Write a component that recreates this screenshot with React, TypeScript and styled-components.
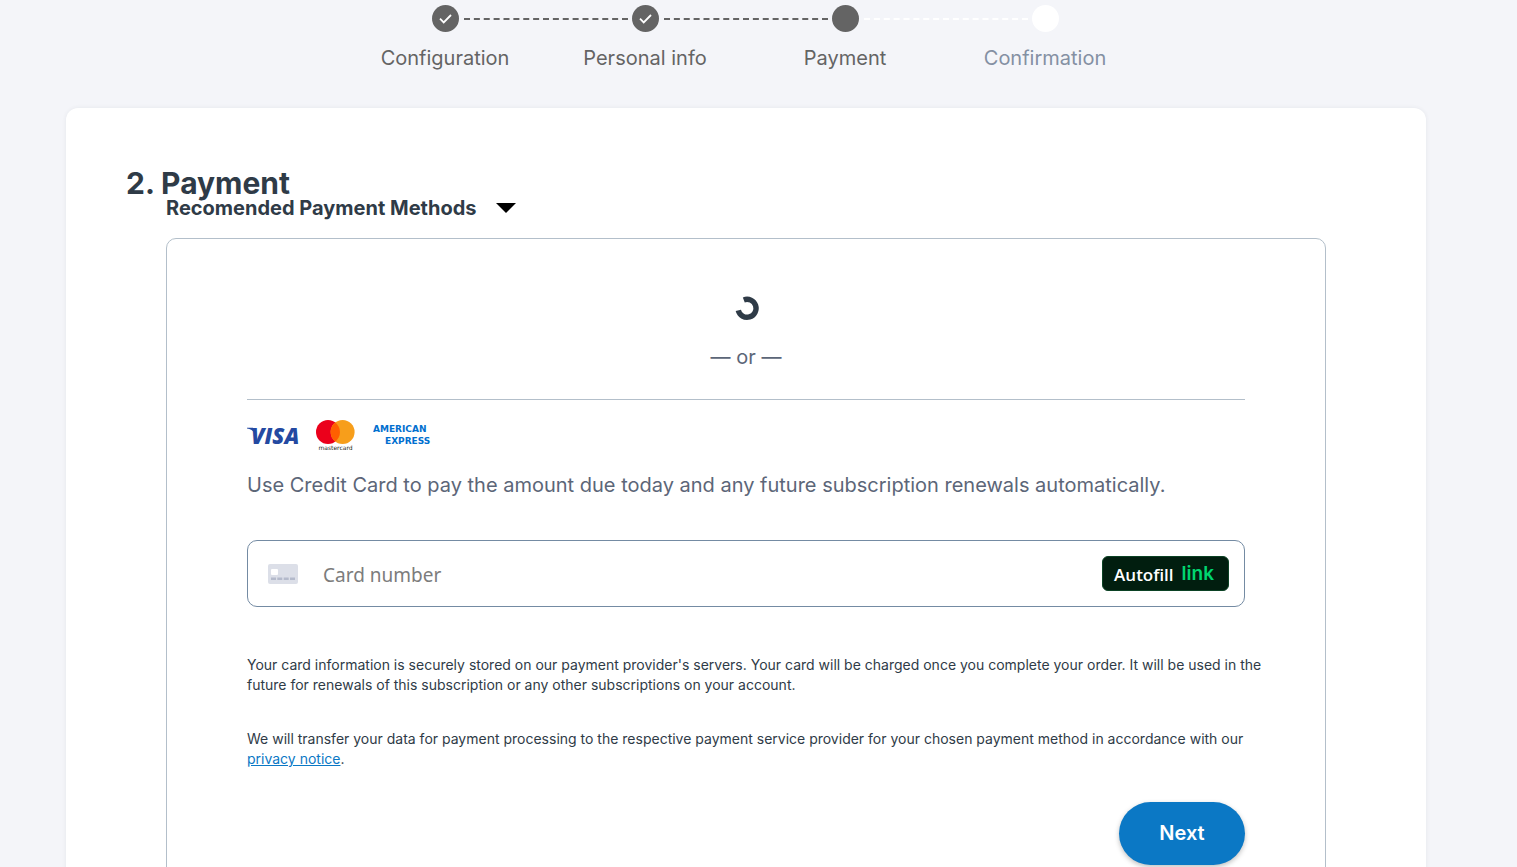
import React from "react";
import styled, { createGlobalStyle, keyframes } from "styled-components";

const GlobalStyle = createGlobalStyle`
  *, *::before, *::after { box-sizing: border-box; }
  body {
    margin: 0;
    background: #f4f5f9;
    color: #2f3b47;
    font-family: Inter, "Liberation Sans", sans-serif;
    font-size: 20px;
    line-height: 28px;
  }
`;

const Page = styled.main`
  display: flex;
  flex-direction: column;
  align-items: center;
  gap: 36px;
  padding: 5px 25px 60px 0;
`;

const Steps = styled.ol`
  display: flex;
  list-style: none;
  margin: 0;
  padding: 0 2px 0 0;
`;

const Step = styled.li<{ $pending?: boolean }>`
  display: grid;
  grid-template-columns: minmax(0, 1fr) 27px minmax(0, 1fr);
  align-items: center;
  row-gap: 12px;
  width: 200px;
  color: ${(p) => (p.$pending ? "#8490a3" : "#646464")};
`;

const Marker = styled.span<{ $pending?: boolean }>`
  grid-column: 2;
  display: grid;
  place-items: center;
  height: 27px;
  border-radius: 50%;
  background: ${(p) => (p.$pending ? "#ffffff" : "#646464")};
`;

const Connector = styled.span<{ $pending?: boolean }>`
  grid-column: 3;
  width: 164px;
  margin-left: 5px;
  border-top: 2px dashed ${(p) => (p.$pending ? "#ffffff" : "#646464")};
`;

const StepLabel = styled.span`
  grid-column: 1 / -1;
  text-align: center;
`;

const Card = styled.section`
  width: 100%;
  max-width: 1360px;
  padding: 60px;
  border-radius: 12px;
  background: #ffffff;
  box-shadow: 0 0 4px rgba(47, 59, 71, 0.08);
`;

const Title = styled.h1`
  margin: 0;
  font-size: 30px;
  line-height: 30px;
  font-weight: 700;
`;

const Methods = styled.div`
  display: flex;
  flex-direction: column;
  align-items: stretch;
  gap: 20px;
  padding: 0 40px;
`;

const MethodsToggle = styled.button`
  display: flex;
  align-items: center;
  align-self: flex-start;
  gap: 20px;
  padding: 0;
  border: 0;
  background: none;
  color: inherit;
  font: inherit;
  line-height: 20px;
  font-weight: 700;
  cursor: pointer;
`;

const MethodPanel = styled.form`
  display: flex;
  flex-direction: column;
  padding: 56px 80px 60px;
  border: 1px solid #b3bfca;
  border-radius: 10px;
`;

const spin = keyframes`
  to { transform: rotate(360deg); }
`;

const Spinner = styled.svg`
  align-self: center;
  margin-left: 2px;
  @media (prefers-reduced-motion: no-preference) {
    animation: ${spin} 1s linear 60s infinite;
  }
`;

const Divider = styled.p`
  margin: 22px 0 28px;
  text-align: center;
  color: #5c6678;
`;

const CardOption = styled.div`
  display: flex;
  flex-direction: column;
  padding-top: 19px;
  border-top: 1px solid #b3bfca;
`;

const Brands = styled.div`
  display: flex;
  align-items: center;
  gap: 16px;
  height: 34px;
`;

const Lead = styled.p`
  margin: 18px 0 41px;
  color: #5c6678;
`;

const CardField = styled.label`
  display: flex;
  align-items: center;
  height: 67px;
  padding: 0 15px 0 20px;
  border: 1px solid #748ba3;
  border-radius: 10px;
`;

const CardInput = styled.input`
  flex: 1;
  min-width: 0;
  margin: 0 20px 0 25px;
  padding: 2px 0 0;
  border: 0;
  outline: 0;
  background: none;
  color: #2f3b47;
  font-family: "Noto Sans", "Open Sans", sans-serif;
  font-size: 19px;
  line-height: 28px;
  &::placeholder { color: #7c7c7c; opacity: 1; }
`;

const Autofill = styled.button`
  display: flex;
  align-items: center;
  gap: 8px;
  height: 35px;
  padding: 0 14px 0 11px;
  border: 1px solid #0b4224;
  border-radius: 6px;
  background: #011e0f;
  color: #ffffff;
  font-family: "Open Sans", "Noto Sans", sans-serif;
  font-size: 17px;
  line-height: 24px;
  font-weight: 600;
  cursor: pointer;
`;

const AutofillText = styled.span`
  padding-top: 2px;
`;

const LinkMark = styled.span`
  color: #00d66f;
  font-family: Inter, sans-serif;
  font-size: 19px;
  font-weight: 600;
`;

const Notes = styled.div`
  display: flex;
  flex-direction: column;
  gap: 34px;
  margin: 48px -20px 33px 0;
`;

const Note = styled.p`
  margin: 0;
  font-size: 14px;
  line-height: 20px;
`;

const NoticeLink = styled.a`
  color: #0b78c5;
  text-decoration: underline;
`;

const NextButton = styled.button`
  align-self: flex-end;
  min-width: 126px;
  height: 63px;
  padding: 0 40px 2px;
  border: 0;
  border-radius: 32px;
  background: #0b78c5;
  color: #ffffff;
  font: inherit;
  font-weight: 600;
  box-shadow: 0 2px 5px rgba(0, 0, 0, 0.25);
  cursor: pointer;
`;

const Check = () => (
  <svg width="15" height="13" viewBox="0 0 15 13" aria-hidden="true">
    <path d="M2 6.7 5.7 10.4 13 3" fill="none" stroke="#fff" strokeWidth="1.8" />
  </svg>
);

const Visa = () => (
  <svg width="52" height="34" viewBox="0 0 52 34" role="img" aria-label="Visa">
    <path d="M0 8.8H6L8 14Q5 10.3 0 9.4Z" fill="#2449a1" />
    <text x="4" y="24.5" fill="#2449a1" fontFamily="Open Sans" fontSize="22" fontWeight="800" fontStyle="italic">VISA</text>
  </svg>
);

const Mastercard = () => (
  <svg width="42" height="34" viewBox="0 0 42 34" role="img" aria-label="Mastercard">
    <circle cx="13" cy="13" r="12" fill="#eb001b" />
    <circle cx="27.6" cy="13" r="12" fill="#f79e1b" />
    <path d="M20.3 3.5a12 12 0 0 1 0 19 12 12 0 0 1 0-19Z" fill="#ff5f00" />
    <text x="20.5" y="31" textAnchor="middle" fill="#231f20" fontFamily="DejaVu Sans" fontSize="6">mastercard</text>
  </svg>
);

const Amex = () => (
  <svg width="60" height="34" viewBox="0 0 60 34" role="img" aria-label="American Express">
    <g fill="#006fcf" fontFamily="DejaVu Sans" fontSize="9" fontWeight="700">
      <text x="0" y="13">AMERICAN</text>
      <text x="12" y="25">EXPRESS</text>
    </g>
  </svg>
);

const CardGlyph = () => (
  <svg width="30" height="20" viewBox="0 0 30 20" aria-hidden="true">
    <rect width="30" height="20" rx="2" fill="#dcdfe8" />
    <rect x="3" y="5" width="7" height="6" rx="1" fill="#fff" />
    <path d="M3 14.7h5M9.3 14.7h5M15.7 14.7h5M22 14.7h5" stroke="#b4bacb" strokeWidth="2.4" />
  </svg>
);

const steps = [
  { label: "Configuration", state: "done" },
  { label: "Personal info", state: "done" },
  { label: "Payment", state: "current" },
  { label: "Confirmation", state: "pending" },
];

export default function App() {
  return (
    <>
      <GlobalStyle />
      <Page>
        <Steps>
          {steps.map((step, i) => {
            const next = steps[i + 1];
            const pending = step.state === "pending";
            return (
              <Step key={step.label} $pending={pending} aria-current={step.state === "current" ? "step" : undefined}>
                <Marker $pending={pending}>{step.state === "done" && <Check />}</Marker>
                {next && <Connector $pending={next.state === "pending"} />}
                <StepLabel>{step.label}</StepLabel>
              </Step>
            );
          })}
        </Steps>
        <Card>
          <Title>2. Payment</Title>
          <Methods>
            <MethodsToggle type="button" aria-expanded="true">
              Recomended Payment Methods
              <svg width="20" height="10" viewBox="0 0 20 10" aria-hidden="true">
                <path d="M0 0H20L10 10Z" fill="#000" />
              </svg>
            </MethodsToggle>
            <MethodPanel onSubmit={(e) => e.preventDefault()}>
              <Spinner width="26" height="26" viewBox="0 0 26 26" role="img" aria-label="Loading">
                <path d="M9.8 4.9A9 9 0 1 1 4.3 15.4" fill="none" stroke="#2f3b47" strokeWidth="5.4" />
              </Spinner>
              <Divider>— or —</Divider>
              <CardOption>
                <Brands>
                  <Visa />
                  <Mastercard />
                  <Amex />
                </Brands>
                <Lead>Use Credit Card to pay the amount due today and any future subscription renewals automatically.</Lead>
                <CardField>
                  <CardGlyph />
                  <CardInput type="text" inputMode="numeric" placeholder="Card number" aria-label="Card number" />
                  <Autofill type="button">
                    <AutofillText>Autofill</AutofillText> <LinkMark>link</LinkMark>
                  </Autofill>
                </CardField>
              </CardOption>
              <Notes>
                <Note>
                  Your card information is securely stored on our payment provider's servers. Your card will be charged
                  once you complete your order. It will be used in the future for renewals of this subscription or any
                  other subscriptions on your account.
                </Note>
                <Note>
                  We will transfer your data for payment processing to the respective payment service provider for your
                  chosen payment method in accordance with our <NoticeLink href="#privacy">privacy notice</NoticeLink>.
                </Note>
              </Notes>
              <NextButton type="submit">Next</NextButton>
            </MethodPanel>
          </Methods>
        </Card>
      </Page>
    </>
  );
}
